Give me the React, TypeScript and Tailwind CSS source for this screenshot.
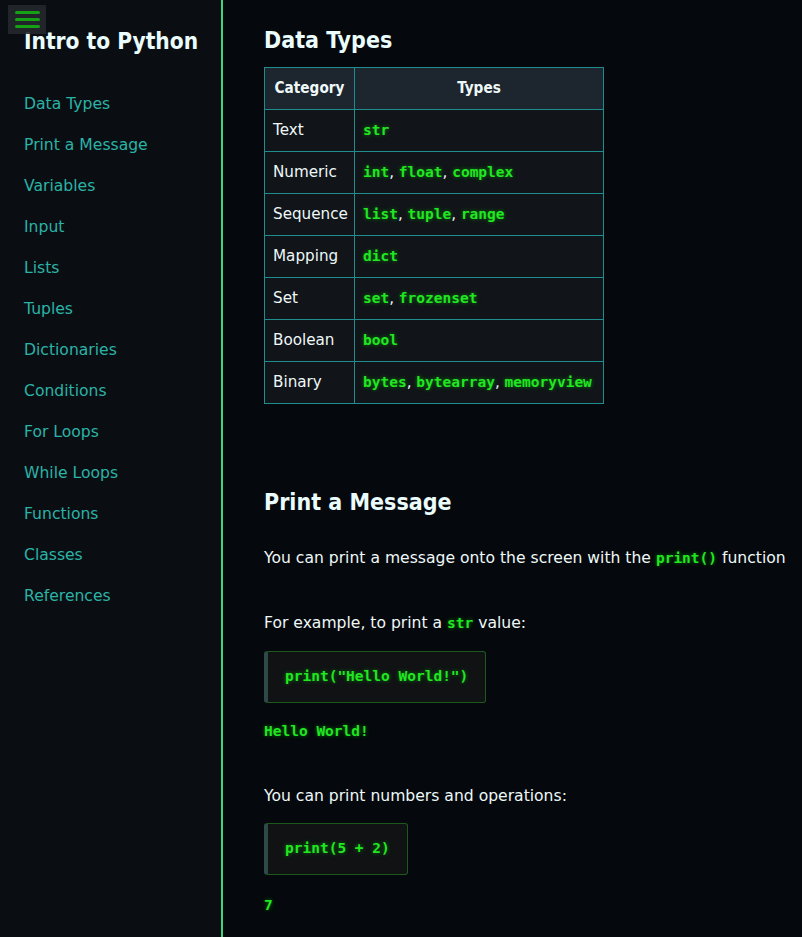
import React from "react";

const sans = { fontFamily: '"DejaVu Sans", sans-serif' };

const navItems = [
  "Data Types",
  "Print a Message",
  "Variables",
  "Input",
  "Lists",
  "Tuples",
  "Dictionaries",
  "Conditions",
  "For Loops",
  "While Loops",
  "Functions",
  "Classes",
  "References",
];

const rows: [string, string[]][] = [
  ["Text", ["str"]],
  ["Numeric", ["int", "float", "complex"]],
  ["Sequence", ["list", "tuple", "range"]],
  ["Mapping", ["dict"]],
  ["Set", ["set", "frozenset"]],
  ["Boolean", ["bool"]],
  ["Binary", ["bytes", "bytearray", "memoryview"]],
];

function Code({ children }: { children: React.ReactNode }) {
  return (
    <code className="font-['DejaVu_Sans_Mono',monospace] text-[14.5px] font-bold text-[#22e622] [text-shadow:0_0_4px_rgba(0,255,0,0.45)]">
      {children}
    </code>
  );
}

function CodeBlock({ children }: { children: React.ReactNode }) {
  return (
    <div className="inline-flex h-[52px] items-center rounded-[3px] border border-[#1c5a1c] border-l-4 border-l-[#2e4a48] bg-[#101214] pl-[17px] pr-[17px]">
      <Code>{children}</Code>
    </div>
  );
}

export default function App() {
  return (
    <div style={sans} className="flex min-h-[937px] bg-[#05080c] text-[#eef8f8]">
      <aside className="relative w-[223px] shrink-0 border-r-2 border-[#3fd47a] bg-[#0a0e13]">
        <button className="absolute left-[8px] top-[5px] z-10 flex h-[29px] w-[38px] flex-col items-center justify-center gap-[4px] bg-[#24282c]/90">
          <span className="h-[3px] w-[25px] rounded-sm bg-[#15a015]" />
          <span className="h-[3px] w-[25px] rounded-sm bg-[#15a015]" />
          <span className="h-[3px] w-[25px] rounded-sm bg-[#15a015]" />
        </button>
        <h1 className="pl-6 pt-[25px] text-[22.5px] font-bold font-stretch-condensed leading-[32px] whitespace-nowrap text-[#eafcfc]">
          Intro to Python
        </h1>
        <nav className="mt-[37px] flex flex-col gap-[20px] pl-6">
          {navItems.map((n) => (
            <a key={n} className="text-[15.6px] leading-[21px] text-[#2ab3a6]">
              {n}
            </a>
          ))}
        </nav>
      </aside>

      <main className="flex-1 pl-[41px] pt-[24px]">
        <h2 className="text-[23px] font-bold font-stretch-condensed leading-[32px] text-[#eafcfc]">
          Data Types
        </h2>
        <table className="mt-[11px] w-[340px] table-fixed border-collapse text-[15.2px]">
          <thead>
            <tr className="bg-[#1d252e]">
              <th className="h-[42px] w-[90px] border border-[#1f8c8e] px-2 font-bold font-stretch-condensed">
                Category
              </th>
              <th className="h-[42px] border border-[#1f8c8e] px-2 font-bold font-stretch-condensed">
                Types
              </th>
            </tr>
          </thead>
          <tbody>
            {rows.map(([cat, types]) => (
              <tr key={cat} className="bg-[#111418]">
                <td className="h-[42px] border border-[#1f8c8e] px-2">{cat}</td>
                <td className="h-[42px] whitespace-nowrap border border-[#1f8c8e] px-2">
                  {types.map((t, i) => (
                    <React.Fragment key={t}>
                      {i > 0 && ", "}
                      <Code>{t}</Code>
                    </React.Fragment>
                  ))}
                </td>
              </tr>
            ))}
          </tbody>
        </table>

        <h2 className="mt-[82px] text-[23px] font-bold font-stretch-condensed leading-[32px] text-[#eafcfc]">
          Print a Message
        </h2>
        <p className="mt-[29px] text-[15.6px] leading-[22px]">
          You can print a message onto the screen with the <Code>print()</Code> function
        </p>
        <p className="mt-[43px] text-[15.6px] leading-[22px]">
          For example, to print a <Code>str</Code> value:
        </p>
        <div className="mt-[17px]">
          <CodeBlock>print("Hello World!")</CodeBlock>
        </div>
        <div className="mt-[16px]">
          <Code>Hello World!</Code>
        </div>
        <p className="mt-[42px] text-[15.6px] leading-[22px]">
          You can print numbers and operations:
        </p>
        <div className="mt-[16px]">
          <CodeBlock>print(5 + 2)</CodeBlock>
        </div>
        <div className="mt-[18px]">
          <Code>7</Code>
        </div>
      </main>
    </div>
  );
}
